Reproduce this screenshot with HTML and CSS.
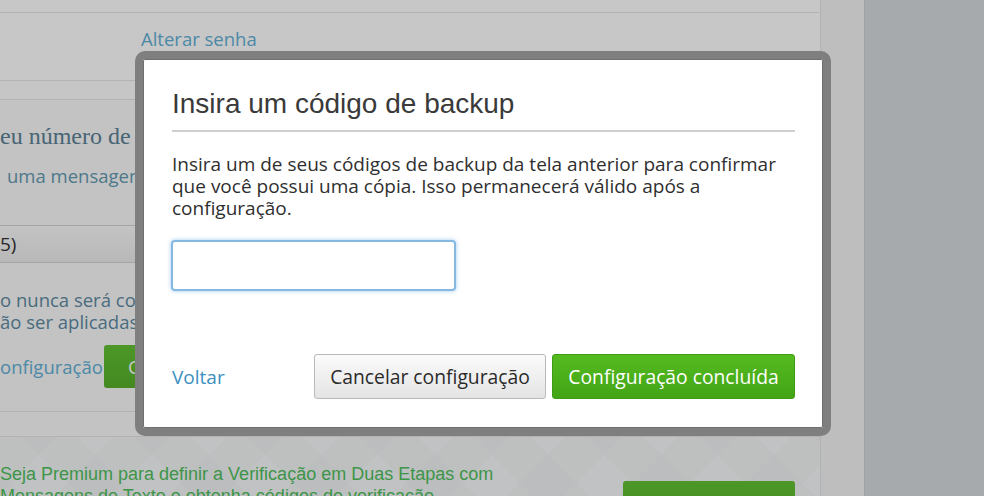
FILE: index.html
```html
<!DOCTYPE html>
<html lang="pt-BR">
<head>
<meta charset="utf-8">
<title>Verificação em duas etapas</title>
<link rel="stylesheet" href="styles.css">
</head>
<body>
<div class="page">
  <main class="main">
    <div class="top-bar"></div>
    <div class="account-row"><a class="link" href="#">Alterar senha</a></div>
    <div class="spacer-row"></div>
    <section class="phone-section">
      <h2 class="serif-heading">eu número de</h2>
      <p class="hint">uma mensagem</p>
      <div class="select-box">5)</div>
      <p class="note">o nunca será com<br>ão ser aplicadas.</p>
      <div class="action-row">
        <a class="link" href="#">onfiguração</a>
        <span class="bg-btn">Continuar</span>
      </div>
    </section>
    <div class="gap-row"></div>
    <section class="premium">
      <p class="premium-text">Seja Premium para definir a Verificação em Duas Etapas com Mensagens de Texto e obtenha códigos de verificação enviados ao seu celular.</p>
      <span class="premium-btn">Seja Premium</span>
    </section>
  </main>
  <div class="strip"></div>
  <aside class="sidebar"></aside>
</div>

<div class="overlay"></div>

<div class="modal" role="dialog">
  <h1 class="modal-title">Insira um código de backup</h1>
  <p class="modal-text">Insira um de seus códigos de backup da tela anterior para confirmar<br>que você possui uma cópia. Isso permanecerá válido após a<br>configuração.</p>
  <input class="code-input" type="text" aria-label="Código de backup">
  <div class="modal-footer">
    <a class="back-link" href="#">Voltar</a>
    <div class="btn-group">
      <button class="btn btn-cancel">Cancelar configuração</button>
      <button class="btn btn-done">Configuração concluída</button>
    </div>
  </div>
</div>
</body>
</html>
```

FILE: styles.css
```css
* { box-sizing: border-box; }

html, body {
  margin: 0;
  padding: 0;
  width: 984px;
  height: 496px;
  overflow: hidden;
  font-family: "Open Sans", "Noto Sans", sans-serif;
  background: #d6dadd;
}

.page {
  display: flex;
  width: 984px;
  height: 496px;
  overflow: hidden;
}

.main {
  width: 821px;
  flex: none;
  background: #ffffff;
  border-right: 1px solid #e4e4e4;
  display: flex;
  flex-direction: column;
}

.main > * { flex-shrink: 0; }

.strip {
  width: 44px;
  flex: none;
  background: #f4f4f4;
  border-right: 1px solid #cfd2d4;
}

.sidebar {
  flex: 1;
  background: #d6dadd;
}

.top-bar {
  height: 13px;
  border-bottom: 1px solid #e6e6e6;
  margin-right: 1px;
}

.account-row {
  height: 68px;
  padding: 15px 0 0 141px;
  border-bottom: 1px solid #e6e6e6;
}

.link {
  color: #62b0d6;
  text-decoration: none;
  font-size: 18.5px;
  line-height: 22px;
}

.spacer-row {
  height: 19px;
  border-bottom: 1px solid #e6e6e6;
  background: #fefefe;
}

.phone-section {
  background: #fafafa;
  padding-top: 21px;
  padding-bottom: 23px;
  border-bottom: 1px solid #e6e6e6;
}

.serif-heading {
  margin: 0;
  font-family: "Liberation Serif", serif;
  font-weight: normal;
  font-size: 24px;
  line-height: 30px;
  color: #5c8296;
  white-space: nowrap;
}

.hint {
  margin: 14px 0 0 7px;
  font-size: 18.5px;
  line-height: 22px;
  color: #649bb2;
  white-space: nowrap;
}

.select-box {
  margin-top: 38px;
  height: 38px;
  border-top: 1px solid #d4d4d4;
  border-bottom: 1px solid #d4d4d4;
  background: linear-gradient(#fbfbfb, #ececec);
  font-size: 19px;
  line-height: 36px;
  color: #333;
}

.note {
  margin: 26px 0 0;
  font-size: 18.5px;
  line-height: 22px;
  color: #5e8aa3;
  white-space: nowrap;
}

.action-row {
  margin-top: 12px;
  height: 43px;
  display: flex;
  align-items: center;
}

.bg-btn {
  margin-left: 1px;
  height: 43px;
  padding: 0 24px;
  display: flex;
  align-items: center;
  background: linear-gradient(#62c233, #57b02a);
  color: #ffffff;
  font-size: 18.5px;
  border-radius: 3px;
}

.gap-row {
  height: 24px;
  background: #fafafa;
}

.premium {
  flex: 1 0 auto;
  border-top: 1px solid #e6e6e6;
  background:
    repeating-linear-gradient(135deg, rgba(0,0,0,0.012) 0 40px, rgba(0,0,0,0) 40px 80px),
    repeating-linear-gradient(45deg, rgba(0,0,0,0.012) 0 40px, rgba(0,0,0,0) 40px 80px),
    #f7f9fa;
  display: flex;
  justify-content: space-between;
  align-items: flex-start;
  padding: 26px 25px 0 0;
}

.premium-text {
  margin: 0;
  width: 510px;
  font-family: "Liberation Sans", Arial, sans-serif;
  font-size: 18px;
  line-height: 22px;
  color: #4fbf5d;
}

.premium-btn {
  margin-top: 18px;
  width: 172px;
  height: 44px;
  display: flex;
  align-items: center;
  justify-content: center;
  background: linear-gradient(#62c233, #57b02a);
  border-radius: 3px;
  color: #ffffff;
  font-size: 18px;
}

.overlay {
  position: fixed;
  inset: 0;
  background: rgba(0, 0, 0, 0.22);
}

.modal {
  position: fixed;
  left: 135px;
  top: 51px;
  width: 696px;
  background: #ffffff;
  border: 8px solid #7f7f7f;
  border-radius: 10px;
  padding: 29px 28px 29px 29px;
  box-shadow: inset 0 0 0 1px #6f6f6f;
}

.modal-title {
  margin: 0;
  font-family: "Liberation Sans", Arial, sans-serif;
  font-weight: normal;
  font-size: 28px;
  line-height: 32px;
  color: #3a3a3a;
  padding-bottom: 10px;
  border-bottom: 2px solid #cfcfcf;
}

.modal-text {
  margin: 21px 0 0;
  font-size: 19px;
  line-height: 22px;
  color: #2f2f2f;
  white-space: nowrap;
}

.code-input {
  display: block;
  margin: 21px 0 0 -1px;
  width: 285px;
  height: 51px;
  border: 2px solid #86b8e2;
  border-radius: 4px;
  box-shadow: 0 0 4px rgba(82, 160, 230, 0.55);
  outline: none;
  font-size: 18px;
  padding: 0 10px;
}

.modal-footer {
  margin-top: 63px;
  height: 45px;
  display: flex;
  align-items: center;
}

.back-link {
  color: #3c8fc0;
  text-decoration: none;
  font-size: 19px;
}

.btn-group {
  margin-left: auto;
  display: flex;
  gap: 6px;
}

.btn {
  height: 45px;
  border-radius: 3px;
  font-family: "Open Sans", "Noto Sans", sans-serif;
  font-size: 19.3px;
  padding: 0;
  cursor: pointer;
}

.btn-cancel {
  width: 232px;
  background: linear-gradient(#fbfbfb, #e4e4e4);
  border: 1px solid #b9b9b9;
  color: #2b2b2b;
}

.btn-done {
  width: 243px;
  background: linear-gradient(#54bb1f, #43a416);
  border: 1px solid #3f9c14;
  color: #ffffff;
}
```
